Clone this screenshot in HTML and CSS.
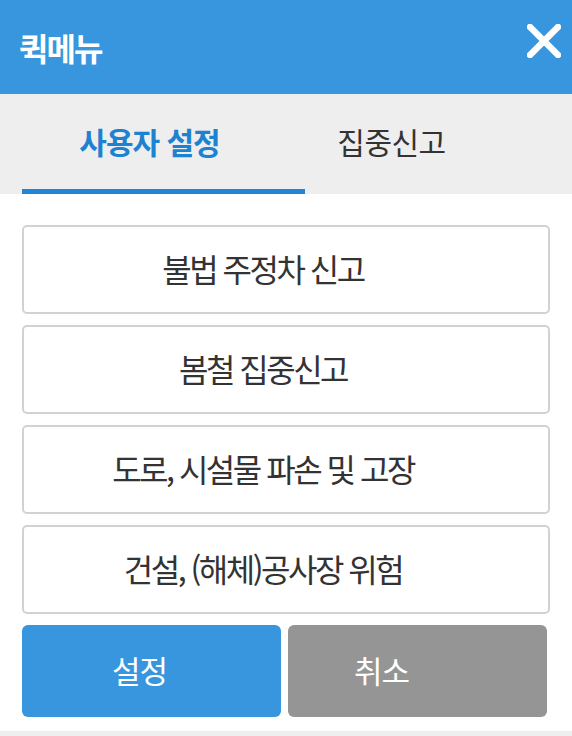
FILE: index.html
```html
<!DOCTYPE html>
<html lang="ko">
<head>
<meta charset="utf-8">
<title>퀵메뉴</title>
<link rel="stylesheet" href="styles.css">
</head>
<body>
<div class="app">
  <header class="header">
    <h1 class="title">퀵메뉴</h1>
    <button class="close" aria-label="닫기">
      <svg width="34" height="34" viewBox="0 0 34 34"><path d="M3 3 L31 31 M31 3 L3 31" stroke="#fff" stroke-width="6.5" stroke-linecap="square" fill="none"/></svg>
    </button>
  </header>
  <nav class="tabs">
    <div class="tab tab-user active"><span>사용자 설정</span></div>
    <div class="tab tab-focus"><span>집중신고</span></div>
  </nav>
  <main class="list">
    <div class="item">불법 주정차 신고</div>
    <div class="item">봄철 집중신고</div>
    <div class="item">도로, 시설물 파손 및 고장</div>
    <div class="item">건설, (해체)공사장 위험</div>
  </main>
  <div class="actions">
    <button class="btn btn-ok">설정</button>
    <button class="btn btn-cancel">취소</button>
  </div>
  <div class="bottom"></div>
</div>
</body>
</html>
```
FILE: styles.css
```css
* { box-sizing: border-box; }
html, body { margin: 0; padding: 0; background: #fff; }
body {
  font-family: "Noto Sans CJK KR", "Noto Sans", sans-serif;
  width: 572px;
  height: 736px;
  overflow: hidden;
}
.app { display: flex; flex-direction: column; height: 736px; }
.header {
  height: 94px;
  background: #3896de;
  display: flex;
  align-items: center;
  justify-content: space-between;
  padding: 0 11px 0 19px;
}
.title {
  margin: 0;
  color: #fff;
  font-size: 32px;
  font-weight: 700;
  letter-spacing: -2px;
  line-height: 1;
}
.close {
  border: 0;
  background: none;
  padding: 0;
  width: 34px;
  height: 34px;
  margin-top: -12px;
  display: flex;
}
.tabs {
  height: 100px;
  background: #eeeeee;
  display: flex;
  padding: 0 22px;
}
.tab {
  height: 100px;
  display: flex;
  align-items: center;
  justify-content: center;
  font-size: 30px;
  letter-spacing: -0.5px;
  color: #333;
  padding-bottom: 6px;
}
.tab-user { width: 283px; padding-right: 28px; }
.tab-focus { width: 245px; padding-right: 72px; }
.tab.active {
  color: #1d82cf;
  font-weight: 700;
  letter-spacing: -1px;
  border-bottom: 5px solid #1e86d4;
  padding-bottom: 1px;
}
.list {
  display: flex;
  flex-direction: column;
  gap: 11px;
  padding: 31px 22px 0;
}
.item {
  height: 89px;
  border: 2px solid #d2d2d2;
  border-radius: 5px;
  display: flex;
  align-items: center;
  justify-content: center;
  padding-right: 46px;
  padding-bottom: 4px;
  font-size: 32px;
  letter-spacing: -2.5px;
  color: #333;
}
.actions {
  display: flex;
  gap: 7px;
  padding: 0 22px;
  margin-top: 11px;
}
.btn {
  width: 259px;
  height: 92px;
  border: 0;
  border-radius: 6px;
  color: #fff;
  font-family: inherit;
  font-size: 31px;
  letter-spacing: -1px;
  padding: 0 0 4px;
}
.btn-ok { background: #3896de; padding-right: 24px; }
.btn-cancel { background: #959595; padding-right: 72px; }
.bottom {
  margin-top: 14px;
  flex: 1;
  background: #eeeeee;
}
```
